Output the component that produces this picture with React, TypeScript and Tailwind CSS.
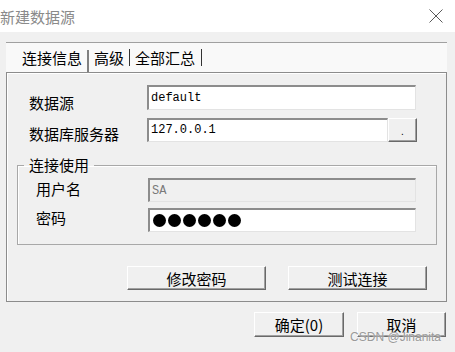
import React from "react";

const cjk = "font-['Noto_Sans_CJK_SC','Noto_Sans',sans-serif]";

function Btn({ children, className = "" }: { children: React.ReactNode; className?: string }) {
  return (
    <button
      className={`flex items-center justify-center bg-[#f0f0f0] border border-t-white border-l-white border-r-[#696969] border-b-[#696969] shadow-[inset_-1px_-1px_0_#a0a0a0] text-[15px] leading-[17px] text-black ${cjk} ${className}`}
    >
      {children}
    </button>
  );
}

function Field({
  children,
  className = "",
  disabled = false,
}: {
  children?: React.ReactNode;
  className?: string;
  disabled?: boolean;
}) {
  return (
    <div
      className={`flex items-center border-t-2 border-l-2 border-r border-b border-t-[#8c8c8c] border-l-[#8c8c8c] border-r-[#e3e3e3] border-b-[#e3e3e3] pl-[2px] font-['Liberation_Mono',monospace] text-[12px] ${
        disabled ? "bg-[#f0f0f0] text-[#7a7a7a]" : "bg-white text-black"
      } ${className}`}
    >
      {children}
    </div>
  );
}

function Label({ children, className = "" }: { children: React.ReactNode; className?: string }) {
  return <span className={`text-[15px] leading-[17px] text-black ${cjk} ${className}`}>{children}</span>;
}

export default function App() {
  return (
    <div className="relative w-[455px] h-[352px] bg-[#f0f0f0] overflow-hidden">
      {/* title bar */}
      <div className="h-[32px] bg-white flex items-center justify-between">
        <span className={`text-[15px] leading-[17px] text-[#8a8a8a] ${cjk}`}>新建数据源</span>
        <svg width="14" height="14" viewBox="0 0 14 14" className="mr-[12px]">
          <path d="M0.5 0.5 L13.5 13.5 M13.5 0.5 L0.5 13.5" stroke="#5a5a5a" strokeWidth="1" fill="none" />
        </svg>
      </div>

      <div className="ml-[6px] w-[441px]">
        {/* tabs */}
        <div className="mt-[10px] h-[30px] border-t border-[#a0a0a0] bg-[#f9f9f9] flex items-center pl-[16px]">
          <Label>连接信息</Label>
          <span className="ml-[5px] mr-[5px] w-[2px] h-[22px] self-end bg-[#808080]" />
          <Label>高级</Label>
          <span className="ml-[5px] mr-[5px] w-px h-[17px] bg-[#333]" />
          <Label>全部汇总</Label>
          <span className="ml-[6px] w-px h-[17px] bg-[#333]" />
        </div>

        {/* panel */}
        <div className="h-[230px] border border-[#8c8c8c] shadow-[inset_1px_1px_0_#ffffff]">
          <div className="mt-[11px] flex items-center">
            <Label className="ml-[22px] w-[118px] pt-[10px]">数据源</Label>
            <Field className="w-[269px] h-[25px]">default</Field>
          </div>
          <div className="mt-[6px] flex items-center">
            <Label className="ml-[22px] w-[118px] pt-[8px]">数据库服务器</Label>
            <Field className="w-[241px] h-[24px]">127.0.0.1</Field>
            <Btn className="w-[29px] h-[24px]">
              <span className="font-['Liberation_Sans',sans-serif] text-[10px] leading-[10px] pt-[4px]">.</span>
            </Btn>
          </div>

          <fieldset className="mt-[13px] ml-[10px] w-[420px] border border-[#a8a8a8] shadow-[inset_1px_1px_0_#ffffff]">
            <legend className={`ml-[6px] px-[5px] text-[15px] leading-[20px] text-black ${cjk}`}>连接使用</legend>
            <div className="mt-[3px] flex items-center">
              <Label className="ml-[18px] w-[112px] pb-[3px]">用户名</Label>
              <Field disabled className="w-[268px] h-[24px]">SA</Field>
            </div>
            <div className="mt-[6px] mb-[12px] flex items-center">
              <Label className="ml-[18px] w-[112px] pb-[5px]">密码</Label>
              <Field className="w-[268px] h-[24px] gap-[2px] pl-[3px]">
                {[0, 1, 2, 3, 4, 5].map((i) => (
                  <span key={i} className="w-[13px] h-[13px] rounded-full bg-black" />
                ))}
              </Field>
            </div>
          </fieldset>

          <div className="mt-[21px] ml-[120px] flex gap-[22px]">
            <Btn className="w-[139px] h-[24px]">修改密码</Btn>
            <Btn className="w-[139px] h-[24px]">测试连接</Btn>
          </div>
        </div>

        {/* dialog buttons */}
        <div className="mt-[10px] flex justify-end gap-[13px] pr-[1px]">
          <Btn className="w-[90px] h-[25px]">确定(0)</Btn>
          <Btn className="w-[89px] h-[25px]">取消</Btn>
        </div>
      </div>

      <span className="absolute right-[14px] bottom-[8px] font-['Liberation_Sans',sans-serif] text-[12px] leading-[14px] text-[#9a9a9a] [text-shadow:0_0_2px_#ffffff]">
        CSDN @Jinanita
      </span>
    </div>
  );
}
